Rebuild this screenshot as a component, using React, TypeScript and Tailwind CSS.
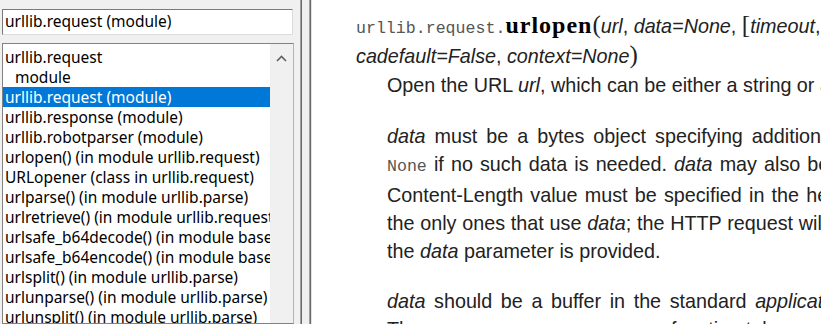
import type { ReactNode } from "react";

const rows: { text: string; indent?: boolean; selected?: boolean }[] = [
  { text: "urllib.request" },
  { text: "module", indent: true },
  { text: "urllib.request (module)", selected: true },
  { text: "urllib.response (module)" },
  { text: "urllib.robotparser (module)" },
  { text: "urlopen() (in module urllib.request)" },
  { text: "URLopener (class in urllib.request)" },
  { text: "urlparse() (in module urllib.parse)" },
  { text: "urlretrieve() (in module urllib.request)" },
  { text: "urlsafe_b64decode() (in module base64)" },
  { text: "urlsafe_b64encode() (in module base64)" },
  { text: "urlsplit() (in module urllib.parse)" },
  { text: "urlunparse() (in module urllib.parse)" },
  { text: "urlunsplit() (in module urllib.parse)" },
];

const ui = "font-['Noto_Sans',sans-serif]";
const mono = "font-['Liberation_Mono',monospace]";
const serif = "font-['Liberation_Serif',serif]";

function Em({ children }: { children: ReactNode }) {
  return <em className="italic">{children}</em>;
}

function Code({ children }: { children: ReactNode }) {
  return <span className={`${mono} text-[16.6px] text-[#555]`}>{children}</span>;
}

function Line({ children, spacing = "" }: { children: ReactNode; spacing?: string }) {
  return <div className={`whitespace-nowrap ${spacing}`}>{children}</div>;
}

export default function App() {
  return (
    <div className="flex h-[324px] w-[821px] overflow-hidden bg-white">
      {/* Index pane */}
      <div className={`flex w-[300px] shrink-0 flex-col bg-[#f0f0f0] pl-[2px] pt-[9px] ${ui} text-[15.5px] text-black`}>
        <div className="h-[26px] w-[291px] border border-[#7a7a7a] border-r-[#dcdcdc] border-b-[#dcdcdc] bg-white pl-[2px] leading-[23px]">
          urllib.request (module)
        </div>
        <div className="mt-[8px] flex min-h-0 flex-1 w-[292px] border border-[#828282] border-r-[#b4b4b4] bg-white">
          <div className="w-[267px] overflow-hidden pt-[3px]">
            {rows.map((r, i) => (
              <div
                key={i}
                className={`h-[20px] whitespace-nowrap leading-[20px] ${r.indent ? "pl-[12px]" : "pl-[2px]"} ${
                  r.selected ? "bg-[#0078d7] text-white" : ""
                }`}
              >
                {r.text}
              </div>
            ))}
          </div>
          <div className="flex w-[23px] justify-center bg-[#f0f0f0] pt-[11px]">
            <svg width="11" height="7" viewBox="0 0 11 7">
              <polyline points="1,6 5.5,1.5 10,6" fill="none" stroke="#606060" strokeWidth="1.6" />
            </svg>
          </div>
        </div>
      </div>

      {/* Splitter */}
      <div className="flex w-[12px] shrink-0">
        <div className="w-px bg-[#a0a0a0]" />
        <div className="w-px bg-[#696969]" />
        <div className="flex-1 bg-[#f0f0f0]" />
        <div className="w-px bg-[#a0a0a0]" />
        <div className="w-px bg-[#696969]" />
        <div className="w-px bg-[#e3e3e3]" />
      </div>

      {/* Topic pane */}
      <div className="min-w-0 flex-1 overflow-hidden pl-[44px] pt-[12px] font-['Liberation_Sans',Arial,sans-serif] text-[19.75px] text-[#222]">
        <div className="whitespace-nowrap leading-[26px]">
          <Code>urllib.request.</Code>
          <span className={`${serif} text-[24px] font-bold tracking-[1px] text-black`}>urlopen</span>
          <span className={`${serif} text-[25px]`}>(</span>
          <Em>url</Em>, <Em>data=None</Em>, <span className={`${serif} text-[25px]`}>[</span>
          <Em>timeout</Em>, <span className={`${serif} text-[25px]`}>]</span>
          <Em>cafile=None</Em>
        </div>
        <div className="whitespace-nowrap leading-[26px]">
          <Em>cadefault=False</Em>, <Em>context=None</Em>
          <span className={`${serif} text-[25px]`}>)</span>
        </div>

        <div className="ml-[31px] leading-[28px]">
          <div className="mt-[2px]">
            <Line>
              Open the URL <Em>url</Em>, which can be either a string or a <Code>Request</Code> object.
            </Line>
          </div>

          <div className="mt-[20px]">
            <Line spacing="[word-spacing:3.5px]">
              <Em>data</Em> must be a bytes object specifying additional data to be sent to the server, or
            </Line>
            <Line spacing="[word-spacing:1.6px]">
              <Code>None</Code> if no such data is needed. <Em>data</Em> may also be an iterable object and in
              that case
            </Line>
            <Line spacing="[word-spacing:1.7px]">
              Content-Length value must be specified in the headers. Currently HTTP requests are
            </Line>
            <Line spacing="[word-spacing:0.3px]">
              the only ones that use <Em>data</Em>; the HTTP request will be a POST instead of a GET when
            </Line>
            <Line>
              the <Em>data</Em> parameter is provided.
            </Line>
          </div>

          <div className="mt-[22px]">
            <Line spacing="[word-spacing:3.1px]">
              <Em>data</Em> should be a buffer in the standard <Em>application/x-www-form-urlencoded</Em> format.
            </Line>
            <Line>
              The <span className={`${mono} text-[16.6px] text-[#0072aa]`}>urllib.parse.urlencode()</span>{" "}
              function takes a mapping or sequence of 2-tuples
            </Line>
          </div>
        </div>
      </div>
    </div>
  );
}
